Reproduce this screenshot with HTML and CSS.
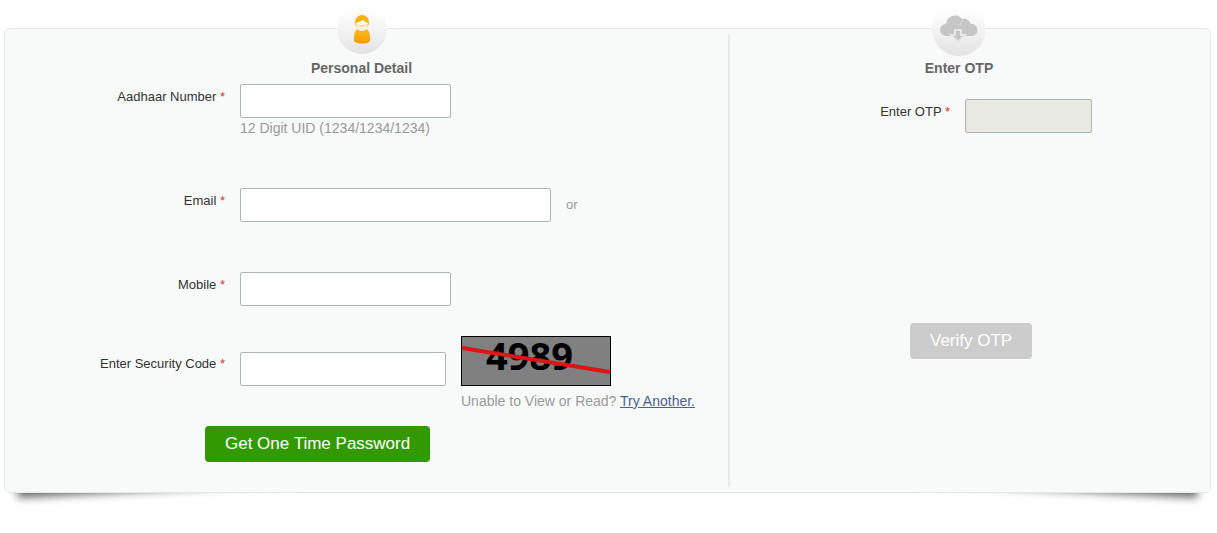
FILE: index.html
```html
<!DOCTYPE html>
<html lang="en">
<head>
  <meta charset="UTF-8">
  <meta name="viewport" content="width=device-width, initial-scale=1.0">
  <title>Get One Time Password</title>
  <link rel="stylesheet" href="styles.css">
</head>
<body>
  <div class="panel">
    <form class="column personal">
      <div class="step-icon">
        <svg width="20" height="30" viewBox="0 0 20 30" aria-hidden="true">
          <defs>
            <linearGradient id="amber" x1="0" y1="0" x2="0" y2="1">
              <stop offset="0" stop-color="#fdbb1e"/>
              <stop offset="1" stop-color="#f79a00"/>
            </linearGradient>
          </defs>
          <path d="M5 15 Q10 19 15 15 Q18 18 18 24 Q19 28 15 29 Q10 30 5 29 Q1 28 2 24 Q2 18 5 15Z" fill="url(#amber)"/>
          <circle cx="10" cy="8" r="7" fill="#fbb012"/>
          <path d="M4 9 Q8 8 11 6 Q13 8 16 9 Q15 15 10 15 Q5 15 4 9Z" fill="#fdf6e6"/>
          <path d="M7 11 Q10 14 13 11" fill="none" stroke="#f5c565" stroke-width="1"/>
        </svg>
      </div>
      <h2>Personal Detail</h2>

      <div class="row">
        <label for="aadhaar">Aadhaar Number <span class="required">*</span></label>
        <div>
          <input type="text" id="aadhaar" name="aadhaar" class="medium">
          <p class="hint">12 Digit UID (1234/1234/1234)</p>
        </div>
      </div>

      <div class="row">
        <label for="email">Email <span class="required">*</span></label>
        <div class="inline">
          <input type="email" id="email" name="email" class="long">
          <span class="or">or</span>
        </div>
      </div>

      <div class="row">
        <label for="mobile">Mobile <span class="required">*</span></label>
        <input type="tel" id="mobile" name="mobile" class="medium">
      </div>

      <div class="row security">
        <label for="code">Enter Security Code <span class="required">*</span></label>
        <div class="inline">
          <input type="text" id="code" name="code" class="code">
          <div>
            <svg class="captcha" width="150" height="50" viewBox="0 0 150 50">
              <rect x="0" y="0" width="150" height="50" fill="#000"/>
              <rect x="1" y="1" width="148" height="48" fill="#808080"/>
              <text x="25" y="34" class="captcha-text">4989</text>
              <path d="M1 12 L149 36" stroke="#dc1414" stroke-width="4"/>
            </svg>
            <p class="hint">Unable to View or Read? <a href="#">Try Another.</a></p>
          </div>
        </div>
      </div>

      <button type="button" class="btn get-otp">Get One Time Password</button>
    </form>

    <form class="column otp">
      <div class="step-icon large">
        <svg width="40" height="30" viewBox="0 0 40 30" aria-hidden="true">
          <path d="M7 22 A6 6 0 0 1 7 10 A9 9 0 0 1 23 5 A8 8 0 0 1 32 10 A6 6 0 0 1 33 22Z" fill="#c6c6c6"/>
          <path d="M24 6 Q21 8 21 11" fill="none" stroke="#dedede" stroke-width="1"/>
          <path d="M16 16 H22 V21 H26 L19 28 L12 21 H16Z" fill="#c6c6c6" stroke="#e6e6e6" stroke-width="2"/>
        </svg>
      </div>
      <h2>Enter OTP</h2>

      <div class="row">
        <label for="otp">Enter OTP <span class="required">*</span></label>
        <input type="text" id="otp" name="otp" class="short" disabled>
      </div>

      <button type="button" class="btn verify" disabled>Verify OTP</button>
    </form>
  </div>
</body>
</html>
```

FILE: styles.css
```css
* {
  box-sizing: border-box;
}

body {
  margin: 0;
  padding: 28px 6px 40px 4px;
  background-color: #fff;
  font-family: "Liberation Sans", Arial, sans-serif;
  font-size: 14px;
  color: #999;
}

.panel {
  position: relative;
  display: grid;
  grid-template-columns: 3fr 2fr;
  padding: 5px 0;
  background-color: #f8faf9;
  border: 1px solid #e4e8e6;
  border-radius: 5px;
}

/* lifted corners */
.panel::before,
.panel::after {
  content: "";
  position: absolute;
  z-index: -1;
  bottom: 12px;
  left: 11px;
  width: 300px;
  height: 40px;
  box-shadow: 0 10px 8px #666;
  transform: rotate(-3deg);
}

.panel::after {
  left: auto;
  right: 11px;
  transform: rotate(3deg);
}

.column {
  padding-bottom: 25px;
}

.personal {
  padding-right: 10px;
}

.otp {
  padding-right: 22px;
  border-left: 2px solid #e8ebea;
}

.step-icon {
  display: flex;
  align-items: center;
  justify-content: center;
  width: 50px;
  height: 50px;
  margin: -30px auto 6px;
  border-radius: 50%;
  background: linear-gradient(#fff 10%, #f4f4f4 50%, #e2e2e2);
}

.step-icon.large {
  width: 54px;
  height: 54px;
  margin: -32px auto 4px;
}

h2 {
  margin: 0 0 8px;
  font-size: 14px;
  line-height: 16px;
  text-align: center;
  color: #666;
}

.row {
  display: grid;
  grid-template-columns: 220px 1fr;
  column-gap: 15px;
  margin-bottom: 50px;
}

label {
  padding-top: 5px;
  font-size: 13px;
  line-height: 16px;
  text-align: right;
  color: #333;
}

.required {
  color: #d9302c;
}

input {
  display: block;
  height: 34px;
  padding: 4px 8px;
  font-size: 14px;
  background-color: #fff;
  border: 1px solid #aab8b4;
  border-radius: 2px;
}

input:disabled {
  background-color: #e9e9e4;
}

.short {
  width: 127px;
}

.code {
  width: 206px;
}

.medium {
  width: 211px;
}

.long {
  width: 311px;
}

.inline {
  display: flex;
  gap: 15px;
}

.or {
  font-size: 13px;
  line-height: 34px;
}

.hint {
  margin: 0;
  line-height: 20px;
}

.hint a {
  color: #44658c;
}

.personal .security {
  margin: -20px 0 15px;
}

.security label {
  padding-top: 20px;
}

.security input {
  margin-top: 16px;
}

.captcha {
  display: block;
  margin-bottom: 5px;
  overflow: visible;
}

.captcha-text {
  font-family: "Open Sans", sans-serif;
  font-size: 38px;
  font-weight: bold;
}

.btn {
  display: block;
  height: 36px;
  padding: 0 20px;
  font-family: inherit;
  font-size: 17px;
  color: #fff;
  border: none;
  border-radius: 4px;
}

.get-otp {
  margin-left: 200px;
  background-color: #339900;
  cursor: pointer;
}

.otp .row {
  margin-top: 23px;
  margin-bottom: 190px;
}

.verify {
  margin-left: 180px;
  background-color: #ccc;
}
```
